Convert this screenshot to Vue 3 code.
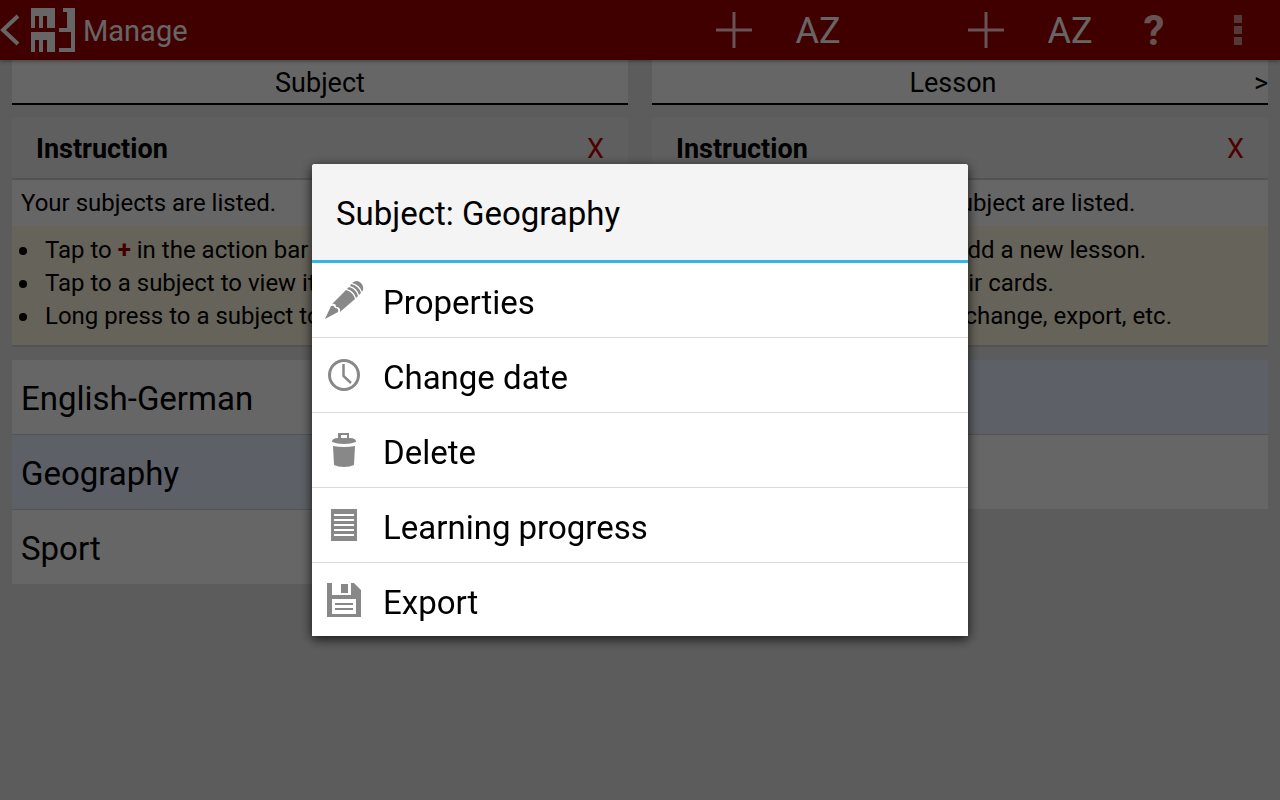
<template>
  <div class="page">
    <header class="action-bar">
      <button class="home-btn" aria-label="Back">
        <svg class="back-icon" width="20" height="34" viewBox="0 0 20 34">
          <path d="M18 3 L3 17 L18 31" fill="none" stroke="currentColor" stroke-width="4" />
        </svg>
        <svg class="logo" width="44" height="44" viewBox="0 0 44 44" fill="currentColor">
          <path d="M0 0H24V20H16V8H12V20H8V8H4V20H0Z" />
          <path d="M0 24H24V44H16V32H12V44H8V32H4V44H0Z" />
          <path d="M32 0H44V44H28V40H40V24H28V20H36V4H32Z" />
        </svg>
        <span class="bar-title">Manage</span>
      </button>

      <nav class="actions">
        <button class="action" aria-label="Add subject">
          <svg width="36" height="36" viewBox="0 0 36 36">
            <path d="M18 0V36M0 18H36" stroke="currentColor" stroke-width="3" />
          </svg>
        </button>
        <button class="action sort">AZ</button>
        <span class="action"></span>
        <button class="action" aria-label="Add lesson">
          <svg width="36" height="36" viewBox="0 0 36 36">
            <path d="M18 0V36M0 18H36" stroke="currentColor" stroke-width="3" />
          </svg>
        </button>
        <button class="action sort">AZ</button>
        <button class="action help">?</button>
        <button class="action more" aria-label="More">
          <svg width="8" height="30" viewBox="0 0 8 30" fill="currentColor">
            <path d="M0 0H8V8H0ZM0 11H8V19H0ZM0 22H8V30H0Z" />
          </svg>
        </button>
      </nav>
    </header>

    <main class="columns">
      <section v-for="column in columns" :key="column.title" class="column">
        <div class="column-title">
          <h2>{{ column.title }}</h2>
          <span v-if="column.next" class="next">&gt;</span>
        </div>

        <div class="instruction">
          <div class="instruction-header">
            <h3>Instruction</h3>
            <button class="close-btn">X</button>
          </div>
          <p class="intro">{{ column.intro }}</p>
          <ul class="hints">
            <li>{{ column.addHint[0] }} <b>+</b> {{ column.addHint[1] }}</li>
            <li v-for="hint in column.hints" :key="hint">{{ hint }}</li>
          </ul>
        </div>

        <ul class="items">
          <li
            v-for="item in column.items"
            :key="item"
            class="item"
            :class="{ selected: item === column.selected }"
          >
            {{ item }}
          </li>
        </ul>
      </section>
    </main>

    <div class="overlay">
      <div class="dialog" role="dialog" aria-labelledby="dialog-title">
        <h2 id="dialog-title" class="dialog-title">Subject: Geography</h2>
        <ul class="menu">
          <li v-for="option in options" :key="option.icon">
            <button class="menu-btn">
              <svg class="menu-icon" width="40" height="40" viewBox="0 0 40 40">
                <g v-if="option.icon === 'pencil'" fill="#888">
                  <path d="M1 39L7 26Q10 25 11 28Q15 28 14 32Z" />
                  <path d="M8 24L22 10Q29 12 31 19L16 32Q17 27 12 27Q12 23 8 24Z" />
                  <path d="M23 9L25 7Q32 9 34 16L32 18Q30 11 23 9Z" />
                  <path d="M26 6L27 4Q35 6 37 13L35 15Q33 8 26 6Z" />
                  <path d="M28 3Q33 -1 37 3Q41 7 38 12Q36 5 28 3Z" />
                </g>
                <g v-else-if="option.icon === 'clock'" fill="none" stroke="#888">
                  <circle cx="20" cy="20" r="14.5" stroke-width="3" />
                  <path d="M19.500 9V21L27 28" stroke-width="2.5" />
                </g>
                <g v-else-if="option.icon === 'trash'" fill="#888">
                  <path d="M14 9V3H25V9H23V5H17V9Z" />
                  <path d="M8 12Q8 8 14 8H26Q32 8 32 12Q27 14 20 14Q13 14 8 12Z" />
                  <path d="M9 16Q20 18 31 16L30 35Q26 37 20 37Q14 37 10 35Z" />
                </g>
                <g v-else-if="option.icon === 'list'">
                  <path d="M7 4H33V36H7Z" fill="#888" />
                  <path d="M10 10H30M10 15H30M10 20H30M10 25H30M10 30H30" stroke="#fff" stroke-width="2" />
                </g>
                <g v-else>
                  <path d="M3 3H8V15H27V3H30L37 10V37H3Z" fill="#888" />
                  <path d="M17 4H24V13H17Z" fill="#888" />
                  <path d="M8 19H32V34H8Z" fill="#fff" />
                  <path d="M11 24H29M11 29H29" stroke="#888" stroke-width="2" />
                </g>
              </svg>
              <span class="menu-label">{{ option.label }}</span>
            </button>
          </li>
        </ul>
      </div>
    </div>
  </div>
</template>

<script setup>
const columns = [
  {
    title: 'Subject',
    next: false,
    intro: 'Your subjects are listed.',
    addHint: ['Tap to', 'in the action bar to add a new subject.'],
    hints: [
      'Tap to a subject to view its lessons.',
      'Long press to a subject to change, export, etc.'
    ],
    items: ['English-German', 'Geography', 'Sport'],
    selected: 'Geography'
  },
  {
    title: 'Lesson',
    next: true,
    intro: 'The lessons of the chosen subject are listed.',
    addHint: ['Tap', 'in the action bar to add a new lesson.'],
    hints: [
      'Tap to a lesson to view their cards.',
      'Long press on a lesson to change, export, etc.'
    ],
    items: ['Capitals', 'Rivers'],
    selected: 'Capitals'
  }
]

const options = [
  { icon: 'pencil', label: 'Properties' },
  { icon: 'clock', label: 'Change date' },
  { icon: 'trash', label: 'Delete' },
  { icon: 'list', label: 'Learning progress' },
  { icon: 'disk', label: 'Export' }
]
</script>

<style>
body {
  margin: 0;
}
</style>

<style scoped>
.page {
  min-height: 100vh;
  background: #e6e6e6;
  color: #000;
  font-family: Roboto, sans-serif;
}

h2,
h3,
p,
ul {
  margin: 0;
  padding: 0;
}

button {
  padding: 0;
  border: none;
  background: none;
  color: inherit;
  font: inherit;
  cursor: pointer;
}

.action-bar {
  position: relative;
  display: flex;
  justify-content: space-between;
  height: 60px;
  background: #a00000;
  color: #fff;
  box-shadow: 0 1px 4px rgba(0, 0, 0, 0.4);
}

.home-btn {
  display: flex;
  align-items: center;
}

.logo {
  margin: 0 8px 0 11px;
}

.bar-title {
  padding-top: 2px;
  font-size: 29px;
}

.actions {
  display: flex;
}

.action {
  display: flex;
  justify-content: center;
  align-items: center;
  width: 84px;
  color: #ffcfcf;
}

.sort {
  padding-top: 2px;
  color: #fff;
  font-size: 36px;
}

.help {
  font-size: 42px;
  font-weight: bold;
}

.more {
  color: #d09090;
}

.columns {
  display: flex;
  gap: 24px;
  padding: 0 12px;
}

.column {
  flex: 1;
  min-width: 0;
}

.column-title {
  display: flex;
  height: 43px;
  margin-bottom: 12px;
  background: #fff;
  border-bottom: 2px solid #000;
  line-height: 47px;
}

.column-title h2 {
  flex: 1;
  font-size: 27px;
  font-weight: normal;
  text-align: center;
}

.next {
  font-size: 27px;
}

.instruction {
  margin-bottom: 13px;
  border-bottom: 2px solid #d0d0d0;
}

.instruction-header {
  display: flex;
  justify-content: space-between;
  align-items: flex-start;
  height: 61px;
  padding: 0 24px;
  background: #eee;
  border-bottom: 2px solid #d0d0d0;
  line-height: 65px;
}

.instruction-header h3 {
  font-size: 27px;
}

.close-btn {
  color: #c00000;
  font-size: 27px;
  line-height: 65px;
}

.intro {
  padding: 7px 9px 6px;
  background: #fff;
  font-size: 24px;
  line-height: 33px;
}

.hints {
  padding: 8px 9px 12px;
  background: #fff8e1;
  font-size: 24px;
  line-height: 33px;
  list-style: none;
}

.hints li {
  display: flex;
  align-items: center;
  white-space: pre;
}

.hints li::before {
  content: '';
  width: 8px;
  height: 8px;
  margin: 0 18px 0 -2px;
  border-radius: 50%;
  background: #000;
}

.hints b {
  color: #a00000;
}

.items {
  list-style: none;
}

.item {
  height: 74px;
  padding: 0 9px;
  background: #fff;
  font-size: 33px;
  line-height: 78px;
}

.item + .item {
  border-top: 1px solid #d0d0d0;
}

.item.selected {
  background: #e8f0ff;
}

.overlay {
  position: fixed;
  inset: 0;
  display: flex;
  justify-content: center;
  align-items: center;
  background: rgba(0, 0, 0, 0.6);
}

.dialog {
  display: flex;
  flex-direction: column;
  width: 656px;
  max-width: 90%;
  max-height: 59vh;
  overflow: hidden;
  background: #fff;
  border-radius: 3px 3px 0 0;
  box-shadow: 0 3px 12px rgba(0, 0, 0, 0.8);
}

.dialog-title {
  flex: none;
  height: 96px;
  padding: 0 24px;
  background: #f4f4f4;
  border-bottom: 3px solid #33b5e5;
  font-size: 33px;
  font-weight: normal;
  line-height: 100px;
}

.menu {
  list-style: none;
}

.menu li + li {
  border-top: 1px solid #dadada;
}

.menu-btn {
  display: flex;
  align-items: center;
  width: 100%;
  height: 74px;
  padding: 0 12px;
  font-size: 33px;
  text-align: left;
}

.menu-icon {
  flex: none;
  margin-right: 19px;
}

.menu-label {
  padding-top: 4px;
}
</style>
